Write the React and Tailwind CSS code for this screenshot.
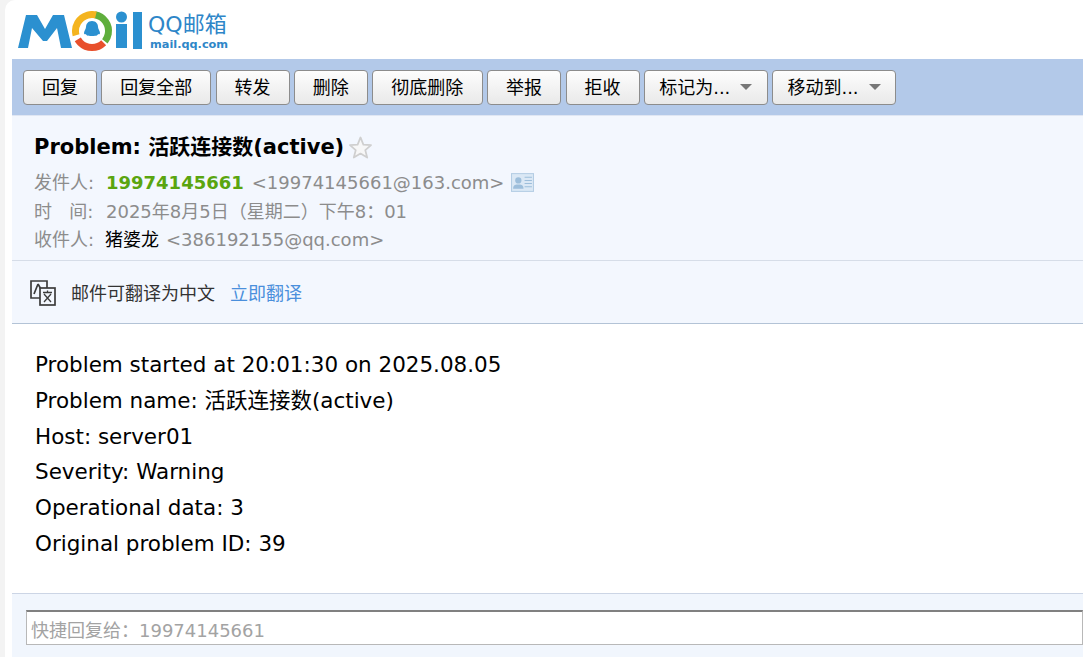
import React from "react"

const FONT = { fontFamily: '"DejaVu Sans", "Noto Sans CJK SC", sans-serif' }

function Btn({ label, w, menu }) {
  return (
    <button
      className="h-[35px] shrink-0 rounded-[4px] border border-[#8c8c8c] bg-gradient-to-b from-[#fdfdfd] to-[#e9e9e9] flex items-center justify-center text-[18px] text-black"
      style={{ width: w }}
    >
      <span>{label}</span>
      {menu && <span className="ml-[10px] w-0 h-0 border-x-[6px] border-x-transparent border-t-[6px] border-t-[#777]" />}
    </button>
  )
}

function Logo() {
  return (
    <div className="flex items-start h-[59px] pl-[12px] pt-[11px]">
      <svg width="126" height="40" viewBox="0 0 126 40">
        <path d="M1 37 L9 4 H20 L28 18 L36 4 H47 L55 37 H44 L40 17 L30 30 H26 L15 17 L11 37 Z" fill="#2b90d0" />
        <circle cx="75" cy="20" r="16.5" fill="none" stroke="#5fae3c" strokeWidth="7" strokeDasharray="34 70" transform="rotate(-80 75 20)" />
        <circle cx="75" cy="20" r="16.5" fill="none" stroke="#f4b41f" strokeWidth="7" strokeDasharray="34 70" transform="rotate(165 75 20)" />
        <circle cx="75" cy="20" r="16.5" fill="none" stroke="#e8502c" strokeWidth="7" strokeDasharray="30 74" transform="rotate(45 75 20)" />
        <path d="M75 10 c4 0 6 3 6 6 c0 2 2 4 2 6 c0 2-2 1-2 1 c0 1-1 2-6 2 s-6-1-6-2 c0 0-2 1-2-1 c0-2 2-4 2-6 c0-3 2-6 6-6z" fill="#2b90d0" />
        <rect x="99" y="13" width="11" height="24" fill="#2b90d0" />
        <circle cx="104.5" cy="6" r="5.5" fill="#2b90d0" />
        <rect x="116" y="1" width="9" height="37" fill="#2b90d0" />
      </svg>
      <div className="ml-[5px] mt-[2px] text-[#2e86c8]">
        <div className="text-[22px] leading-[24px]">QQ邮箱</div>
        <div className="mt-[1px] pl-[2px] text-[11.3px] leading-[13px] font-bold">mail.qq.com</div>
      </div>
    </div>
  )
}

export default function App() {
  const actions = [
    ["回复", 74], ["回复全部", 110], ["转发", 74], ["删除", 74], ["彻底删除", 110.5],
    ["举报", 74.5], ["拒收", 74],
  ]

  return (
    <div className="w-[1083px] h-[657px] overflow-hidden bg-[#f3f3f3] pl-[5px]" style={FONT}>
      <div className="h-full bg-white rounded-tl-[10px]">
        <Logo />
        <div className="ml-[7px]">
          <div className="h-[57px] bg-[#b3c9e9] flex items-center gap-[4.25px] pl-[11px] border-b border-[#dfe6f3]">
            {actions.map(([label, w]) => <Btn key={label} label={label} w={w} />)}
            <Btn label="标记为..." w={124} menu />
            <Btn label="移动到..." w={124} menu />
          </div>

          <div className="h-[145px] bg-[#f3f7fe] pl-[22px] pt-[17px] border-b border-[#d6dde8]">
            <div className="flex items-center h-[30px] text-[21px] font-bold text-black">
              Problem: 活跃连接数(active)
              <svg className="ml-[5px] -mt-[1px]" width="23" height="23" viewBox="0 0 24 24">
                <path d="M12 1.5 L15 9 L23 9.5 L17 14.8 L19 22.5 L12 18.3 L5 22.5 L7 14.8 L1 9.5 L9 9 Z" fill="#f7f7f7" stroke="#cfcfcf" strokeWidth="1.8" strokeLinejoin="round" />
              </svg>
            </div>
            <div className="mt-[5px] flex items-center h-[29px] text-[18px] text-[#8c8c8c]">
              <span className="w-[72px]">发件人:</span>
              <span className="font-bold text-[#5aa50f]">19974145661</span>
              <span className="ml-[8px]">&lt;19974145661@163.com&gt;</span>
              <svg className="ml-[7px]" width="23" height="19" viewBox="0 0 22 18">
                <rect x="0.5" y="0.5" width="21" height="17" fill="#dbe8f5" stroke="#b4cde4" />
                <circle cx="7" cy="7" r="3" fill="#9dbedb" />
                <path d="M2 15 c0-4 3-4 5-4 s5 0 5 4z" fill="#9dbedb" />
                <path d="M13 4h7M13 7h7M13 10h7M13 13h7" stroke="#9dbedb" />
              </svg>
            </div>
            <div className="flex items-center h-[29px] text-[18px] text-[#8c8c8c]">
              <span className="w-[72px] whitespace-pre">时{"   "}间:</span>
              <span>2025年8月5日（星期二）下午8：01</span>
            </div>
            <div className="flex items-center h-[27px] text-[18px] text-[#8c8c8c]">
              <span className="w-[71px]">收件人:</span>
              <span className="text-black">猪婆龙</span>
              <span className="ml-[7px]">&lt;386192155@qq.com&gt;</span>
            </div>
          </div>

          <div className="h-[63px] bg-[#f3f7fe] flex items-center pl-[18px] pt-[2px] border-b border-[#b3c3d6] text-[18px]">
            <svg width="26" height="26" viewBox="0 0 26 26" fill="none" stroke="#3c3c3c" strokeWidth="1.7">
              <path d="M10 18 H1 V1 H17 V8" />
              <path d="M8 4 L4 14 M8 4 L12 11" />
              <rect x="10" y="8" width="15" height="17" fill="#f3f7fe" />
              <path d="M13 12.5 H22 M17.5 10.5 V12.5 M14 22 L21 14 M14 14 L21 22" strokeWidth="1.3" />
            </svg>
            <span className="ml-[15px] text-[#333]">邮件可翻译为中文</span>
            <span className="ml-[15px] text-[#4a8fdc]">立即翻译</span>
          </div>

          <div className="h-[270px] bg-white pl-[23px] pt-[23px] border-b border-[#ccd5e5] text-[21.47px] leading-[35.8px] text-black">
            <div>Problem started at 20:01:30 on 2025.08.05</div>
            <div>Problem name: 活跃连接数(active)</div>
            <div>Host: server01</div>
            <div>Severity: Warning</div>
            <div>Operational data: 3</div>
            <div>Original problem ID: 39</div>
          </div>

          <div className="h-[70px] bg-[#f1f6fd] pl-[14px] pt-[16px]">
            <div className="h-[35px] bg-white border border-[#b8b8b8] border-t-2 border-t-[#808080] flex items-center pl-[4px] pt-[5px] text-[18px] text-[#a3a3a3]">
              快捷回复给：19974145661
            </div>
          </div>
        </div>
      </div>
    </div>
  )
}
